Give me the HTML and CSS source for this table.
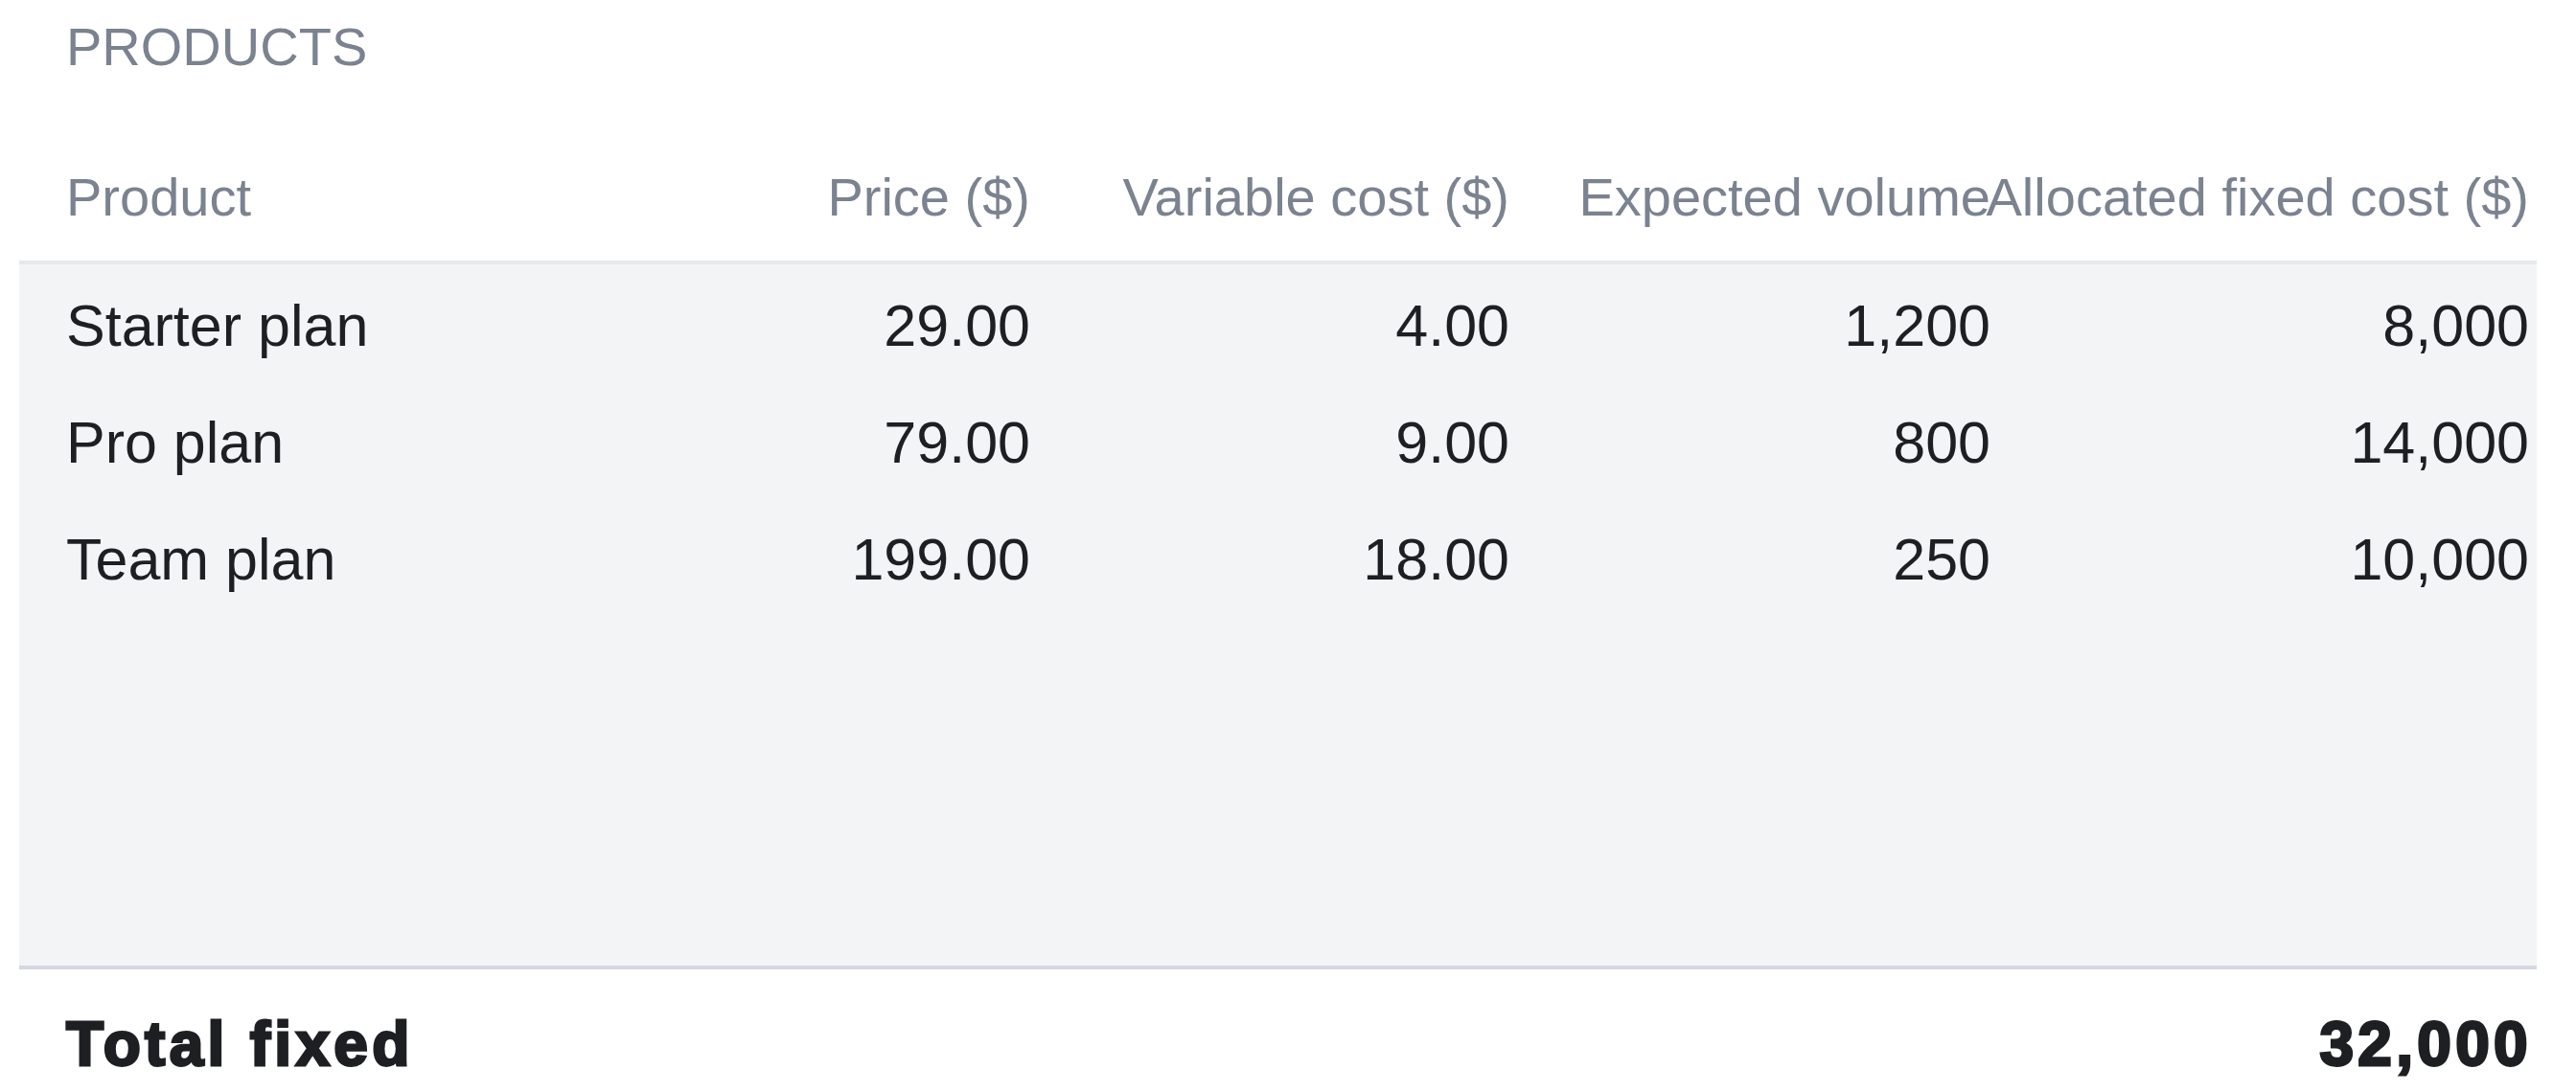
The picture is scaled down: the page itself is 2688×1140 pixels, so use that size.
FILE: index.html
```html
<!DOCTYPE html>
<html lang="en">
<head>
<meta charset="utf-8">
<title>Products</title>
<link rel="stylesheet" href="styles.css">
</head>
<body>
<div class="page">
  <div class="section-label">PRODUCTS</div>
  <div class="table">
    <div class="row head">
      <div class="cell">Product</div>
      <div class="cell num">Price ($)</div>
      <div class="cell num">Variable cost ($)</div>
      <div class="cell num">Expected volume</div>
      <div class="cell num">Allocated fixed cost ($)</div>
    </div>
    <div class="body">
      <div class="row">
        <div class="cell">Starter plan</div>
        <div class="cell num">29.00</div>
        <div class="cell num">4.00</div>
        <div class="cell num">1,200</div>
        <div class="cell num">8,000</div>
      </div>
      <div class="row">
        <div class="cell">Pro plan</div>
        <div class="cell num">79.00</div>
        <div class="cell num">9.00</div>
        <div class="cell num">800</div>
        <div class="cell num">14,000</div>
      </div>
      <div class="row">
        <div class="cell">Team plan</div>
        <div class="cell num">199.00</div>
        <div class="cell num">18.00</div>
        <div class="cell num">250</div>
        <div class="cell num">10,000</div>
      </div>
    </div>
    <div class="total">
      <span class="total-label">Total fixed</span>
      <span class="total-value">32,000</span>
    </div>
  </div>
</div>
</body>
</html>
```
FILE: styles.css
```css
html, body {
  margin: 0;
  padding: 0;
  background: #ffffff;
}

body {
  font-family: "Liberation Sans", Arial, sans-serif;
  color: #1d1f23;
}

.page {
  padding: 7px 41px 0 20px;
}

.section-label {
  padding-left: 49px;
  font-size: 56px;
  line-height: 84px;
  color: #7b8290;
}

.table {
  margin-top: 73px;
}

.row {
  display: grid;
  grid-template-columns: 606px 400px 500px 502px 562px;
  padding: 16px 8px 16px 49px;
  font-size: 61px;
  line-height: 90px;
}

.row.head {
  padding-top: 0;
  padding-bottom: 24px;
  font-size: 56px;
  line-height: 84px;
  color: #7b8290;
  border-bottom: 4px solid #e7e8eb;
}

.cell {
  white-space: nowrap;
  min-width: 0;
}

.cell.num {
  display: flex;
  justify-content: flex-end;
}

.body {
  background: #f3f4f6;
  padding-top: 3px;
  height: 729px;
  border-bottom: 4px solid #d6d7e3;
}

.total {
  display: flex;
  justify-content: space-between;
  align-items: baseline;
  padding: 30px 8px 0 49px;
  font-size: 64px;
  line-height: 96px;
  font-weight: 700;
  letter-spacing: 4.3px;
  -webkit-text-stroke: 2.8px #1d1f23;
}

.total-value {
  margin-right: -3px;
}
```
